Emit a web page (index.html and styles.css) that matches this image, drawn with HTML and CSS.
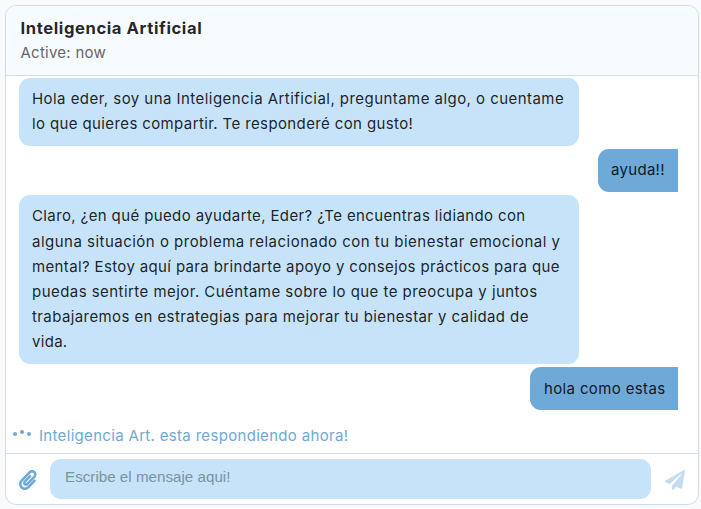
FILE: index.html
```
<!DOCTYPE html>
<html lang="es">
<head>
<meta charset="utf-8">
<title>Chat</title>
<link rel="stylesheet" href="styles.css">
</head>
<body>
<main class="chat">
  <header class="chat-header">
    <div class="name">Inteligencia Artificial</div>
    <div class="info">Active: now</div>
  </header>
  <section class="messages">
    <div class="bubble incoming">
      <span class="line t45">Hola eder, soy una Inteligencia Artificial, preguntame algo, o cuentame</span>
      <span class="line t38">lo que quieres compartir. Te responderé con gusto!</span>
    </div>
    <div class="bubble outgoing ayuda"><span class="line t30">ayuda!!</span></div>
    <div class="bubble incoming">
      <span class="line t38">Claro, ¿en qué puedo ayudarte, Eder? ¿Te encuentras lidiando con</span>
      <span class="line t49">alguna situación o problema relacionado con tu bienestar emocional y</span>
      <span class="line t36">mental? Estoy aquí para brindarte apoyo y consejos prácticos para que</span>
      <span class="line t45">puedas sentirte mejor. Cuéntame sobre lo que te preocupa y juntos</span>
      <span class="line t40">trabajaremos en estrategias para mejorar tu bienestar y calidad de</span>
      <span class="line t30">vida.</span>
    </div>
    <div class="bubble outgoing last"><span class="line t36">hola como estas</span></div>
    <div class="typing">
      <span class="dots"><i></i><i class="up"></i><i></i></span>
      <span class="typing-text">Inteligencia Art. esta respondiendo ahora!</span>
    </div>
  </section>
  <footer class="composer">
    <svg class="clip" viewBox="0 0 448 512"><path d="M43.246 466.142c-58.43-60.289-57.341-157.511 1.386-217.581L254.392 34c44.316-45.332 116.351-45.336 160.671 0 43.89 44.894 43.943 117.329 0 162.276L232.214 383.128c-29.855 30.537-78.633 30.111-107.982-.998-28.275-29.97-27.368-77.473 1.452-106.953l143.743-146.835c6.182-6.314 16.312-6.422 22.626-.241l22.861 22.379c6.315 6.182 6.422 16.312.241 22.626L171.427 319.927c-4.932 5.045-5.236 13.428-.648 18.292 4.372 4.634 11.245 4.711 15.688.165l182.849-186.851c19.613-20.062 19.613-52.725-.011-72.798-19.189-19.627-49.957-19.637-69.154 0L90.39 293.295c-34.763 35.56-35.299 93.12-1.191 128.313 34.01 35.093 88.985 35.137 123.058.286l172.06-175.999c6.177-6.319 16.307-6.433 22.626-.256l22.877 22.364c6.319 6.177 6.434 16.307.256 22.626l-172.06 175.998c-59.576 60.938-155.943 60.216-214.77-.485z"/></svg>
    <div class="input">Escribe el mensaje aqui!</div>
    <svg class="send" viewBox="0 0 512 512"><path d="M476 3.2L12.5 270.6c-18.1 10.4-15.8 35.6 2.2 43.2L121 358.4l287.3-253.2c5.5-4.9 13.3 2.6 8.6 8.3L176 407v80.5c0 23.6 28.5 32.9 42.5 15.8L282 426l124.6 52.2c14.2 6 30.4-2.9 33-18.2l72-432C515 7.8 493.3-6.8 476 3.2z"/></svg>
  </footer>
</main>
</body>
</html>
```
FILE: styles.css
```
* { box-sizing: border-box; }
body {
  margin: 0;
  padding: 5px;
  background: #f9fafc;
  font-family: Inter, "Open Sans", sans-serif;
  font-size: 15px;
  line-height: 25.14px;
  color: rgba(0, 0, 0, .87);
}
.chat {
  display: flex;
  flex-direction: column;
  width: 694px;
  height: 500px;
  border: 1px solid #d1dbe4;
  border-radius: 11px;
  background: #fff;
  overflow: hidden;
}
.chat-header {
  height: 70px;
  padding: 10px 14.5px 0;
  background: #f6fbff;
  border-bottom: 1px solid #d1dbe4;
}
.name, .info { line-height: 25px; white-space: nowrap; }
.name { font-size: 16.6px; font-weight: 700; letter-spacing: .6px; }
.info { line-height: 23px; color: #666; letter-spacing: .25px; }
.messages {
  flex: 1;
  display: flex;
  flex-direction: column;
  align-items: flex-start;
  gap: 3px;
  padding: 2px 20px 0 13px;
}
.bubble { padding: 8px 13px 10px; border-radius: 11px; }
.incoming { width: 560px; background: #c6e3fa; }
.outgoing { align-self: flex-end; background: #6ea9d7; border-radius: 11px 0 0 11px; }
.ayuda { width: 80px; }
.last { width: 148px; padding: 9px 13px 9px 14px; }
.line { display: block; white-space: nowrap; }
.t30 { letter-spacing: .3px; }
.t36 { letter-spacing: .36px; }
.t38 { letter-spacing: .38px; }
.t40 { letter-spacing: .4px; }
.t45 { letter-spacing: .45px; }
.t49 { letter-spacing: .485px; }
.typing {
  display: flex;
  align-items: center;
  gap: 8px;
  margin: 10px 0 0 -6px;
  color: #6ea9d7;
  white-space: nowrap;
}
.typing-text { letter-spacing: .32px; }
.dots { display: flex; gap: 3px; padding-bottom: 3px; }
.dots i { width: 4px; height: 4px; border-radius: 50%; background: #6ea9d7; }
.dots .up { transform: translateY(-2px); }
.composer {
  display: flex;
  align-items: flex-start;
  height: 51px;
  padding: 5px 13px 0 13px;
  border-top: 1px solid #d1dbe4;
}
.clip { width: 17.5px; height: 20px; margin: 11px 13.5px 0 0; fill: #6ea9d7; }
.input {
  flex: 1;
  height: 40px;
  padding-left: 15px;
  border-radius: 11px;
  background: #c6e3fa;
  color: #7d929f;
  font: 15.2px/36px "Liberation Sans", Arial, sans-serif;
}
.send { width: 20px; height: 20px; margin: 11px 0 0 14px; fill: #c5dcef; }
```
